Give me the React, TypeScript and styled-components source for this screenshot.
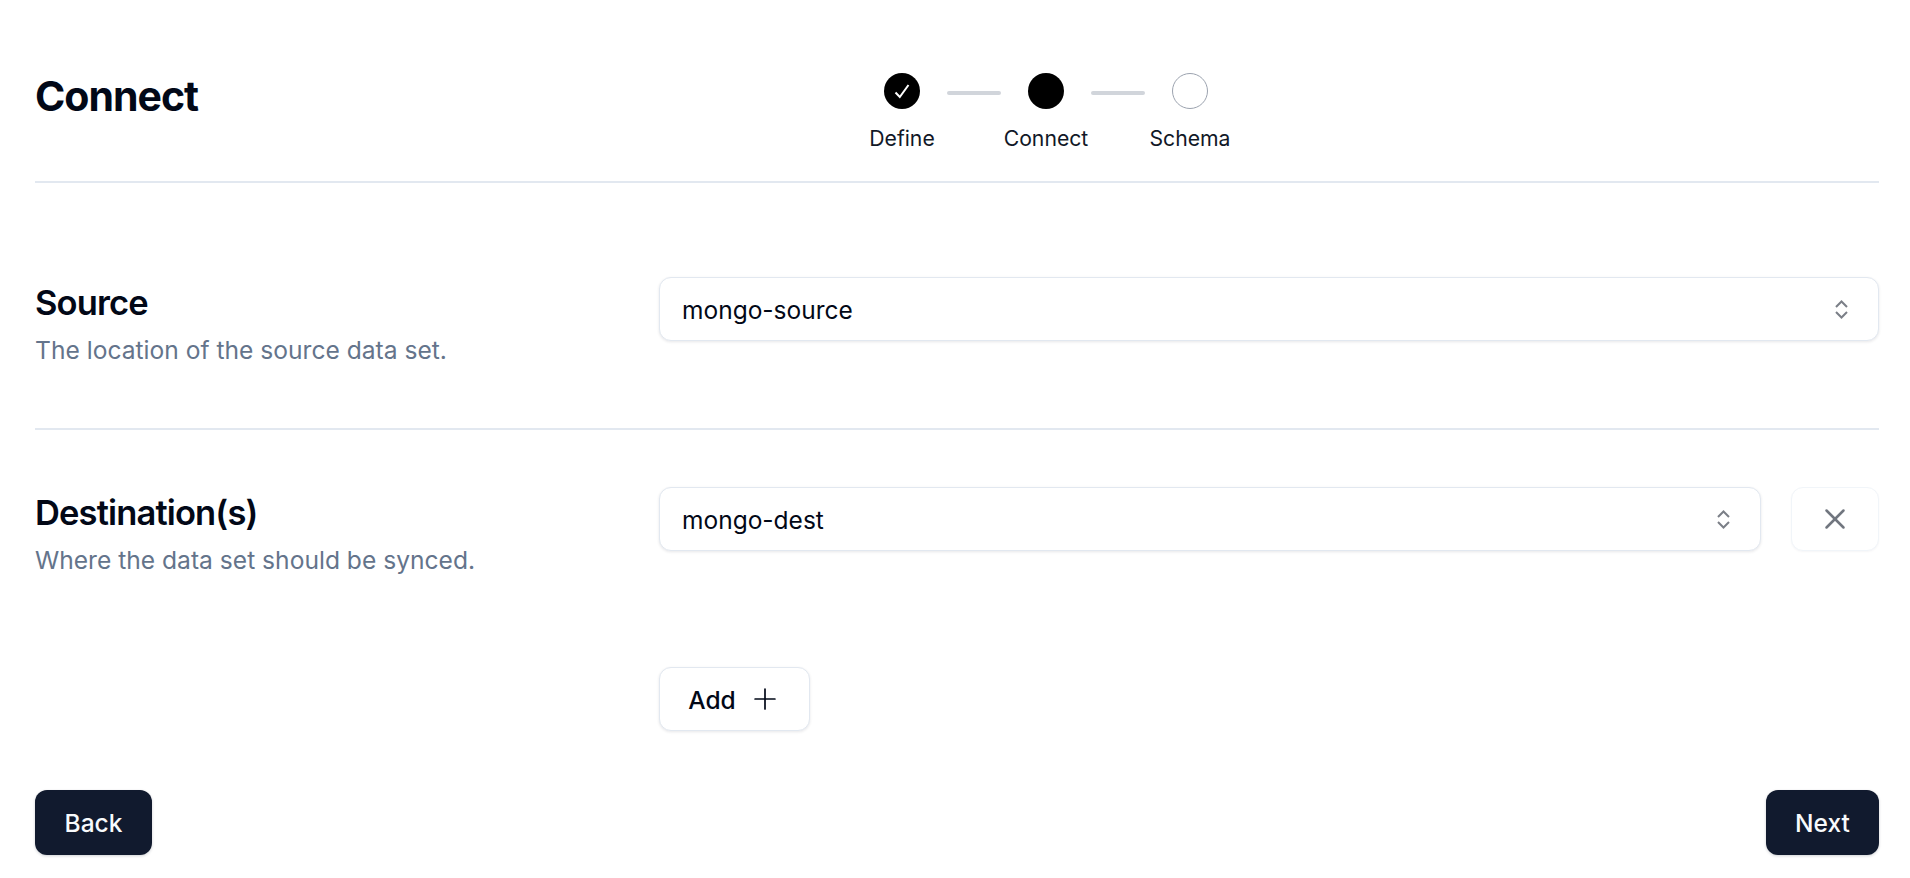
import React from "react";
import styled, { createGlobalStyle } from "styled-components";
import { Plus, X } from "lucide-react";

const GlobalStyle = createGlobalStyle`
  html, body {
    margin: 0;
    padding: 0;
    background: #fff;
    font-family: Inter, "Liberation Sans", sans-serif;
    color: #020817;
  }
`;

const Page = styled.div`
  box-sizing: border-box;
  width: 1910px;
  height: 878px;
  padding: 0 31px 0 35px;
  display: flex;
  flex-direction: column;
`;

const Header = styled.header`
  display: grid;
  grid-template-columns: 795px auto;
  height: 181px;
  padding-top: 73px;
  box-sizing: border-box;
`;

const Title = styled.h1`
  margin: 0;
  font-size: 41px;
  line-height: 46px;
  font-weight: 700;
  letter-spacing: -1px;
`;

const Stepper = styled.div`
  width: 432px;
  display: flex;
  flex-direction: column;
  align-items: center;
`;

const StepTrack = styled.div`
  display: flex;
  align-items: center;
  gap: 27px;
`;

const StepDot = styled.div<{ $filled?: boolean }>`
  box-sizing: border-box;
  width: 36px;
  height: 36px;
  border-radius: 50%;
  display: flex;
  align-items: center;
  justify-content: center;
  background: ${p => (p.$filled ? "#000" : "#fff")};
  border: ${p => (p.$filled ? "none" : "1px solid #9ca3af")};
`;

const StepLine = styled.div`
  width: 54px;
  height: 4px;
  margin-top: 4px;
  border-radius: 2px;
  background: #d1d5db;
`;

const StepLabels = styled.div`
  display: grid;
  grid-template-columns: repeat(3, 144px);
  margin-top: 15px;
`;

const StepLabel = styled.div`
  text-align: center;
  font-size: 21.2px;
  line-height: 28px;
  color: #111827;
`;

const Rule = styled.hr`
  margin: 0;
  width: 100%;
  height: 2px;
  border: 0;
  background: #e2e8f0;
  flex: none;
`;

const Section = styled.section<{ $height: number; $top: number }>`
  display: grid;
  grid-template-columns: 624px 1fr;
  align-content: start;
  height: ${p => p.$height}px;
  padding-top: ${p => p.$top}px;
  box-sizing: border-box;
`;

const SectionHead = styled.div`
  padding-top: 6px;
`;

const SectionTitle = styled.h2`
  margin: 0;
  font-size: 34.5px;
  line-height: 40px;
  font-weight: 600;
  letter-spacing: -0.85px;
`;

const SectionText = styled.p`
  margin: 11px 0 0;
  font-size: 24.6px;
  line-height: 32px;
  color: #64748b;
`;

const Fields = styled.div`
  display: flex;
  flex-direction: column;
`;

const FieldRow = styled.div`
  display: flex;
  gap: 30px;
`;

const Select = styled.div`
  box-sizing: border-box;
  flex: 1;
  height: 64px;
  padding: 0 30px 0 22px;
  display: flex;
  align-items: center;
  justify-content: space-between;
  border: 1px solid #e2e8f0;
  border-radius: 12px;
  background: #fff;
  box-shadow: 0 1px 3px rgba(15, 23, 42, 0.1);
  font-size: 24.5px;
`;

const SelectValue = styled.span`
  padding-top: 2px;
`;

const RemoveButton = styled.button`
  box-sizing: border-box;
  width: 88px;
  height: 64px;
  padding: 0;
  display: flex;
  align-items: center;
  justify-content: center;
  border: 1px solid #f1f5f9;
  border-radius: 12px;
  background: #fff;
  color: #71767f;
  box-shadow: 0 1px 2px rgba(15, 23, 42, 0.04);
`;

const AddButton = styled.button`
  box-sizing: border-box;
  align-self: flex-start;
  width: 151px;
  height: 64px;
  margin-top: 116px;
  padding: 0 0 0 1px;
  display: flex;
  align-items: center;
  justify-content: center;
  gap: 12px;
  border: 1px solid #e2e8f0;
  border-radius: 12px;
  background: #fff;
  color: #020817;
  box-shadow: 0 1px 3px rgba(15, 23, 42, 0.1);
  font: 450 24.5px Inter, sans-serif;
`;

const AddLabel = styled.span`
  padding-top: 2px;
`;

const Footer = styled.footer`
  display: flex;
  justify-content: space-between;
  margin-top: auto;
  padding-bottom: 23px;
`;

const PrimaryButton = styled.button<{ $width: number }>`
  box-sizing: border-box;
  width: ${p => p.$width}px;
  height: 65px;
  padding: 0;
  border: 0;
  border-radius: 12px;
  background: #111a2e;
  color: #f8fafc;
  box-shadow: 0 1px 3px rgba(15, 23, 42, 0.2);
  font: 450 24.5px Inter, sans-serif;
`;

const CaretSort = () => (
  <svg width="13" height="19" viewBox="0 0 13 19" fill="none" stroke="#7b7f87" strokeWidth="2">
    <path d="M1 7 L6.5 1.5 L12 7" />
    <path d="M1 12 L6.5 17.5 L12 12" />
  </svg>
);

const Check = () => (
  <svg width="16" height="15" viewBox="0 0 16 15" fill="none" stroke="#fff" strokeWidth="2">
    <path d="M1.5 8.5 L5.8 13 L14.5 1" />
  </svg>
);

export default function App() {
  return (
    <>
      <GlobalStyle />
      <Page>
        <Header>
          <Title>Connect</Title>
          <Stepper>
            <StepTrack>
              <StepDot $filled>
                <Check />
              </StepDot>
              <StepLine />
              <StepDot $filled />
              <StepLine />
              <StepDot />
            </StepTrack>
            <StepLabels>
              <StepLabel>Define</StepLabel>
              <StepLabel>Connect</StepLabel>
              <StepLabel>Schema</StepLabel>
            </StepLabels>
          </Stepper>
        </Header>
        <Rule />
        <Section $height={245} $top={94}>
          <SectionHead>
            <SectionTitle>Source</SectionTitle>
            <SectionText>The location of the source data set.</SectionText>
          </SectionHead>
          <Fields>
            <FieldRow>
              <Select>
                <SelectValue>mongo-source</SelectValue>
                <CaretSort />
              </Select>
            </FieldRow>
          </Fields>
        </Section>
        <Rule />
        <Section $height={330} $top={57}>
          <SectionHead>
            <SectionTitle>Destination(s)</SectionTitle>
            <SectionText>Where the data set should be synced.</SectionText>
          </SectionHead>
          <Fields>
            <FieldRow>
              <Select>
                <SelectValue>mongo-dest</SelectValue>
                <CaretSort />
              </Select>
              <RemoveButton>
                <X size={34} strokeWidth={1.8} />
              </RemoveButton>
            </FieldRow>
            <AddButton>
              <AddLabel>Add</AddLabel>
              <Plus size={34} strokeWidth={1.2} />
            </AddButton>
          </Fields>
        </Section>
        <Footer>
          <PrimaryButton $width={117}>Back</PrimaryButton>
          <PrimaryButton $width={113}>Next</PrimaryButton>
        </Footer>
      </Page>
    </>
  );
}
